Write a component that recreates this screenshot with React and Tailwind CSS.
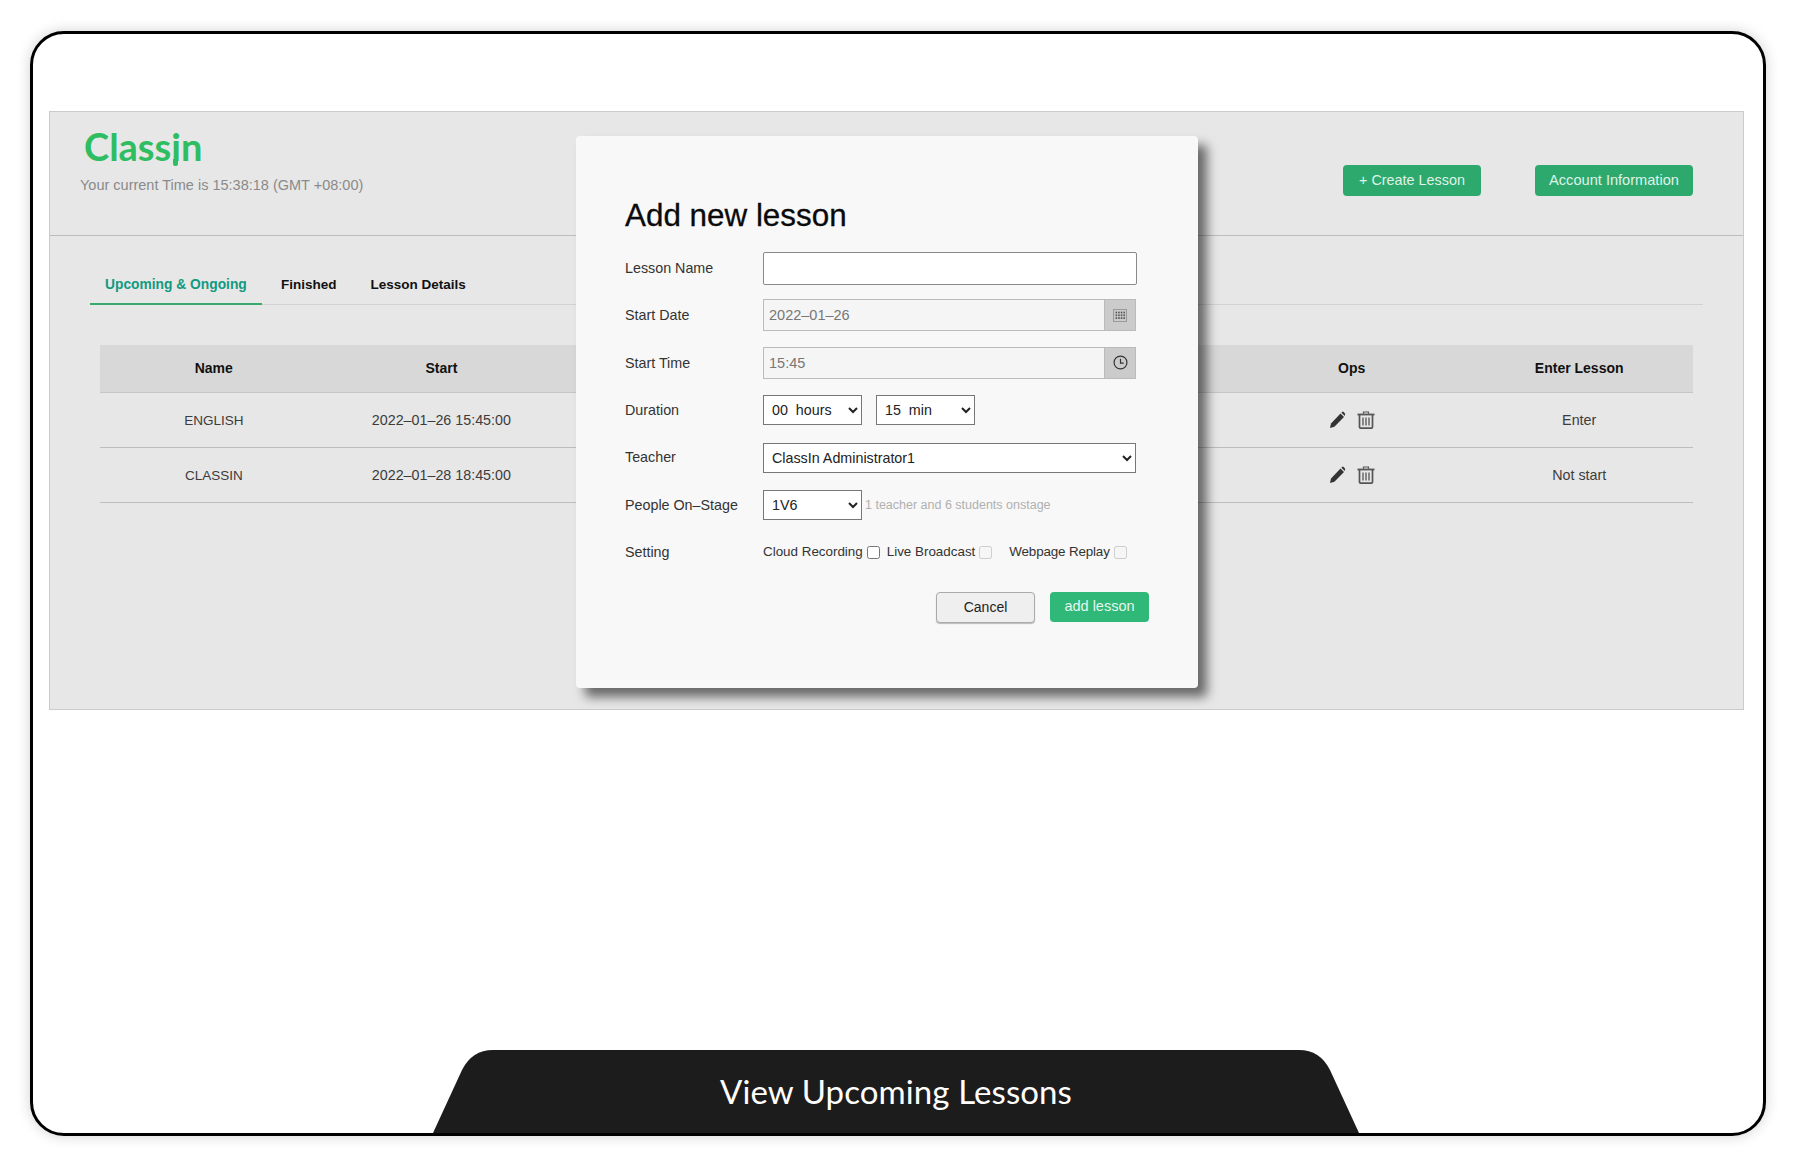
import React from "react";

const sans = "font-['Liberation_Sans',Arial,sans-serif]";

function PencilIcon() {
  return (
    <svg width="17" height="18" viewBox="0 0 17 18" className="text-[#333]">
      <path d="M1 17 L2 12.5 L11.5 2.6 L15 6 L5.4 15.8 Z" fill="currentColor" />
      <path d="M12.4 1.7 L13.4 0.8 Q14 0.4 14.6 0.9 L16 2.4 Q16.4 3 16 3.5 L15.8 4.9 Z" fill="currentColor" />
    </svg>
  );
}

function TrashIcon() {
  return (
    <svg width="18" height="18" viewBox="0 0 18 18" fill="none" stroke="#555">
      <path d="M0.5 3.5 H17.5" strokeWidth="1.8" />
      <path d="M6.5 2.8 V1 H11.5 V2.8" strokeWidth="1.2" />
      <path d="M2.5 4 V16 Q2.5 17.2 3.7 17.2 H14.3 Q15.5 17.2 15.5 16 V4" strokeWidth="1.7" />
      <path d="M6 6.5 V14.5 M9 6.5 V14.5 M12 6.5 V14.5" strokeWidth="1.3" />
    </svg>
  );
}

function CalendarIcon() {
  const xs = [2.5, 5, 7.5, 10];
  const ys = [3.5, 6.2, 8.9];
  return (
    <svg width="14" height="14" viewBox="0 0 13.5 13.5">
      <path d="M0.5 1.5 H13 V13 H0.5 Z" fill="none" stroke="#999" />
      {ys.map((y) => xs.map((x) => <rect key={`${x}-${y}`} x={x} y={y} width="1.5" height="1.7" fill="#555" />))}
    </svg>
  );
}

function ClockIcon() {
  return (
    <svg width="15" height="15" viewBox="0 0 14 14" fill="none" stroke="#333" strokeWidth="1.1">
      <circle cx="7" cy="7" r="6" />
      <path d="M7 3.5 V7.5 H10" />
    </svg>
  );
}

function Row({ label, children }) {
  return (
    <div className="flex items-center h-[34px] mb-[13.4px]">
      <div className="w-[138px] shrink-0 pt-[1px] text-[14.3px] text-[#333]">{label}</div>
      {children}
    </div>
  );
}

function DateField({ value, icon }) {
  return (
    <div className="flex w-[373px] h-[32px] border border-[#bbb]">
      <div className="flex-1 bg-[#f5f5f5] pl-[5px] text-[14.5px] leading-[30px] text-[#777]">{value}</div>
      <div className="w-[31px] bg-[#cbcbcb] flex items-center justify-center border-l border-[#bbb]">{icon}</div>
    </div>
  );
}

const rows = [
  { name: "ENGLISH", start: "2022–01–26 15:45:00", enter: "Enter" },
  { name: "CLASSIN", start: "2022–01–28 18:45:00", enter: "Not start" },
];

export default function App() {
  return (
    <div className={`${sans} h-[1166px] w-full bg-white pt-[31px] pl-[30px]`}>
      <div className="relative h-[1105px] w-[1736px] rounded-[34px] border-[3px] border-black bg-white pt-[77px] px-[16px] shadow-[0_0_14px_rgba(0,0,0,0.18)]">
        {/* background page */}
        <div className="h-[599px] w-[1695px] border border-[#cbcbcb] bg-[#e7e7e7]">
          <div className="flex justify-between h-[124px] border-b border-[#bdbdbd] pl-[30px] pr-[50px]">
            <div>
              <div className="mt-[14px] ml-[4px] h-[40px] text-[38px] leading-[40px] font-['Lato',sans-serif] font-bold text-[#2fbd62]">
                Class
                <span className="relative">
                  i
                  <span className="absolute left-[2px] top-[36px] h-[7px] w-[5px] rounded-b-[2px] bg-[#2fbd62]" />
                </span>
                n
              </div>
              <div className="mt-[9px] text-[14.5px] text-[#8a8a8a]">Your current Time is 15:38:18 (GMT +08:00)</div>
            </div>
            <div className="flex items-start gap-[54px] pt-[53px]">
              <button className="h-[31px] w-[138px] rounded-[4px] bg-[#2ea96d] pt-[1px] text-[14.4px] text-[#dff3e8]">+ Create Lesson</button>
              <button className="h-[31px] w-[158px] rounded-[4px] bg-[#2ea96d] pt-[1px] text-[14.6px] text-[#dff3e8]">Account Information</button>
            </div>
          </div>

          <div className="ml-[40px] mr-[40px] mt-[26px] flex h-[43px] items-start border-b border-[#d2d2d2] text-[13.5px] font-bold">
            <div className="h-[43px] w-[172px] border-b-2 border-[#3aa96f] pt-[13px] pl-[15px] text-[13.8px] text-[#129a80]">Upcoming &amp; Ongoing</div>
            <div className="pt-[13px] pl-[19px] text-[#111]">Finished</div>
            <div className="pt-[13px] pl-[34px] text-[#111]">Lesson Details</div>
          </div>

          <div className="ml-[50px] mr-[50px] mt-[40px] text-[14.3px]">
            <div className="grid grid-cols-7 h-[48px] items-center bg-[#d8d8d8] border-b border-[#c6c6c6] text-center text-[14px] font-bold text-[#111]">
              <div>Name</div>
              <div>Start</div>
              <div />
              <div />
              <div />
              <div>Ops</div>
              <div>Enter Lesson</div>
            </div>
            {rows.map((r) => (
              <div key={r.name} className="grid grid-cols-7 h-[55px] items-center border-b border-[#bdbdbd] pt-[2px] text-center text-[#3c3c3c]">
                <div className="text-[13.5px]">{r.name}</div>
                <div>{r.start}</div>
                <div />
                <div />
                <div />
                <div className="flex items-center justify-center gap-[11px] mb-[3px]">
                  <PencilIcon />
                  <TrashIcon />
                </div>
                <div>{r.enter}</div>
              </div>
            ))}
          </div>
        </div>

        {/* dialog */}
        <div className="absolute left-[543px] top-[102px] h-[552px] w-[622px] rounded-[4px] bg-[#f8f8f8] pl-[49px] pt-[63px] shadow-[9px_9px_11px_rgba(0,0,0,0.55)]">
          <h2 className="mb-[18px] text-[31.4px] leading-[34px] font-normal text-[#0a0a0a] [-webkit-text-stroke:0.3px_#0a0a0a]">Add new lesson</h2>
          <Row label="Lesson Name">
            <input className="h-[33px] w-[374px] rounded-[2px] border border-[#8a8a8a] bg-white" />
          </Row>
          <Row label="Start Date">
            <DateField value="2022–01–26" icon={<CalendarIcon />} />
          </Row>
          <Row label="Start Time">
            <DateField value="15:45" icon={<ClockIcon />} />
          </Row>
          <Row label="Duration">
            <select defaultValue="00" className="h-[30px] w-[99px] border border-[#777] bg-white pl-[4px] text-[14.3px] text-[#222]">
              <option value="00">00&nbsp; hours</option>
            </select>
            <select defaultValue="15" className="ml-[14px] h-[30px] w-[99px] border border-[#777] bg-white pl-[4px] text-[14.3px] text-[#222]">
              <option value="15">15&nbsp; min</option>
            </select>
          </Row>
          <Row label="Teacher">
            <select className="h-[30px] w-[373px] border border-[#777] bg-white pl-[4px] text-[14.3px] text-[#222]">
              <option>ClassIn Administrator1</option>
            </select>
          </Row>
          <Row label="People On–Stage">
            <select className="h-[30px] w-[99px] border border-[#777] bg-white pl-[4px] text-[14.3px] text-[#222]">
              <option>1V6</option>
            </select>
            <span className="ml-[3px] text-[12.5px] text-[#b0b0b0]">1 teacher and 6 students onstage</span>
          </Row>
          <Row label="Setting">
            <div className="flex items-center text-[13.4px] text-[#333]">
              <span>Cloud Recording</span>
              <input type="checkbox" className="ml-[4px] mr-[7px] h-[13px] w-[13px]" />
              <span>Live Broadcast</span>
              <input type="checkbox" disabled className="ml-[4px] mr-[17px] h-[13px] w-[13px]" />
              <span className="tracking-[-0.15px]">Webpage Replay</span>
              <input type="checkbox" disabled className="ml-[4px] h-[13px] w-[13px]" />
            </div>
          </Row>
          <div className="mt-[23px] ml-[311px] flex items-start gap-[15px]">
            <button className="h-[31px] w-[99px] rounded-[4px] border border-[#aaa] bg-[#efefef] text-[14px] text-[#222] shadow-[0_1px_1px_rgba(0,0,0,0.25)]">Cancel</button>
            <button className="h-[30px] w-[99px] rounded-[4px] bg-[#2fb878] text-[14.5px] text-[#e6f6ee]">add lesson</button>
          </div>
        </div>

        {/* caption tab */}
        <div className="absolute bottom-0 left-[400px] flex h-[83px] w-[926px] items-center justify-center">
          <svg width="926" height="83" viewBox="0 0 926 83" className="absolute inset-0">
            <path d="M0 83 L29 20 Q39 0 60 0 H866 Q887 0 897 20 L926 83 Z" fill="#1c1c1c" />
          </svg>
          <span className="relative font-['Lato',sans-serif] text-[33px] leading-none tracking-[0.1px] text-white">View Upcoming Lessons</span>
        </div>
      </div>
    </div>
  );
}
